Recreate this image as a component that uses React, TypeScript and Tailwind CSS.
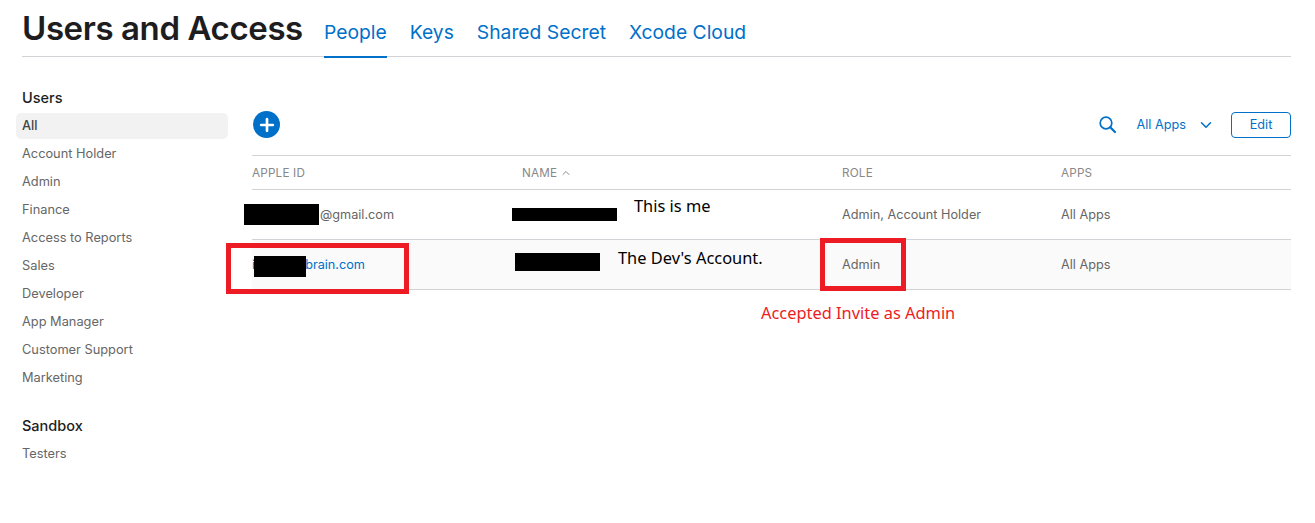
import { ChevronDown, ChevronUp, Plus } from "lucide-react";

const roles = [
  "Account Holder",
  "Admin",
  "Finance",
  "Access to Reports",
  "Sales",
  "Developer",
  "App Manager",
  "Customer Support",
  "Marketing",
];

const columns = "grid grid-cols-[270px_320px_219px_1fr]";

const Redact = ({ className }: { className: string }) => (
  <div className={`absolute bg-black ${className}`} />
);

const Note = ({ className, children }: { className: string; children: string }) => (
  <div className={`absolute font-['Noto_Sans',sans-serif] text-[16.4px] leading-[22px] whitespace-nowrap ${className}`}>
    {children}
  </div>
);

export default function App() {
  return (
    <div className="relative h-[523px] w-[1315px] overflow-hidden bg-white font-['Inter',sans-serif] text-[#666]">
      {/* Page Header */}
      <div className="ml-[22px] mr-[24px] flex h-[57px] items-end border-b border-[#d2d2d7]">
        <h1 className="mr-[21px] h-[56px] w-[281px] pt-[7px] text-[33px] leading-[42px] font-semibold tracking-[-0.4px] whitespace-nowrap text-[#1d1d1f]">
          Users and Access
        </h1>
        <nav className="flex gap-[23px] text-[19.3px] leading-[28px] text-[#0070c9]">
          <a className="-mb-[2px] h-[41px] border-b-2 border-[#0070c9] pt-[1px]">People</a>
          <a className="h-[39px] pt-[1px]">Keys</a>
          <a className="h-[39px] pt-[1px]">Shared Secret</a>
          <a className="h-[39px] pt-[1px]">Xcode Cloud</a>
        </nav>
      </div>

      <div className="flex pr-[24px]">
        {/* Sidebar */}
        <aside className="ml-[16px] w-[212px] shrink-0 pt-[30px] text-[12.8px]">
          <h2 className="h-[26px] px-[6px] text-[14.5px] leading-[22px] font-medium text-[#1d1d1f]">Users</h2>
          <div className="flex h-[26px] items-center rounded-[5px] bg-[#f2f2f2] px-[6px] font-medium text-[#444]">All</div>
          <ul className="mt-px">
            {roles.map((role) => (
              <li key={role} className="flex h-[28px] items-center px-[6px]">
                {role}
              </li>
            ))}
          </ul>
          <h2 className="mt-[20px] h-[28px] px-[6px] text-[14.5px] leading-[28px] font-medium text-[#1d1d1f]">Sandbox</h2>
          <div className="flex h-[28px] items-center px-[6px]">Testers</div>
        </aside>

        {/* Users Table */}
        <main className="ml-[24px] min-w-0 flex-1 text-[12.7px]">
          <div className="flex h-[98px] items-center justify-between pt-[37px]">
            <div className="ml-px flex size-[27px] items-center justify-center rounded-full bg-[#0070c9]">
              <Plus size={20} strokeWidth={3.2} className="text-white" />
            </div>
            <div className="flex items-center text-[#0070c9]">
              <svg width="19" height="19" viewBox="0 0 19 19" fill="none" stroke="currentColor" className="mr-[20px]">
                <circle cx="8" cy="8" r="5.8" strokeWidth="1.7" />
                <path d="M12.2 12.2L17 17" strokeWidth="2.2" strokeLinecap="round" />
              </svg>
              <span className="pt-px">All Apps</span>
              <ChevronDown size={18} strokeWidth={2} className="mr-[16px] ml-[11px]" />
              <button className="h-[26px] w-[60px] rounded-[4px] border border-[#0070c9] pt-px text-[12.7px]">Edit</button>
            </div>
          </div>

          <div className={`${columns} h-[35px] items-center border-y border-[#d2d2d7] pt-[2px] text-[11.7px] tracking-[0.2px] text-[#888]`}>
            <div>APPLE ID</div>
            <div className="flex items-center gap-[3px]">
              NAME <ChevronUp size={12} strokeWidth={2} />
            </div>
            <div>ROLE</div>
            <div>APPS</div>
          </div>
          <div className={`${columns} h-[50px] items-center border-b border-[#d2d2d7]`}>
            <div className="pl-[68px]">@gmail.com</div>
            <div />
            <div>Admin, Account Holder</div>
            <div>All Apps</div>
          </div>
          <div className={`${columns} h-[50px] items-center border-b border-[#d2d2d7] bg-[#fafafa]`}>
            <div className="flex justify-between pr-[157px] text-[#0070c9]">
              <span>i</span>
              <span>brain.com</span>
            </div>
            <div />
            <div>Admin</div>
            <div>All Apps</div>
          </div>
        </main>
      </div>

      {/* Redactions and annotations drawn over the screenshot */}
      <Redact className="top-[204px] left-[244px] h-[21px] w-[75px]" />
      <Redact className="top-[208px] left-[512px] h-[13px] w-[105px]" />
      <Redact className="top-[256px] left-[254px] h-[21px] w-[52px]" />
      <Redact className="top-[253px] left-[515px] h-[18px] w-[85px]" />
      <div className="absolute top-[243px] left-[226px] h-[51px] w-[183px] border-[5px] border-[#ed1c24]" />
      <div className="absolute top-[238px] left-[820px] h-[53px] w-[86px] border-[5px] border-[#ed1c24]" />
      <Note className="top-[195px] left-[634px] text-black">This is me</Note>
      <Note className="top-[247px] left-[618px] text-black">The Dev's Account.</Note>
      <Note className="top-[302px] left-[761px] text-[#ed1c24]">Accepted Invite as Admin</Note>
    </div>
  );
}
